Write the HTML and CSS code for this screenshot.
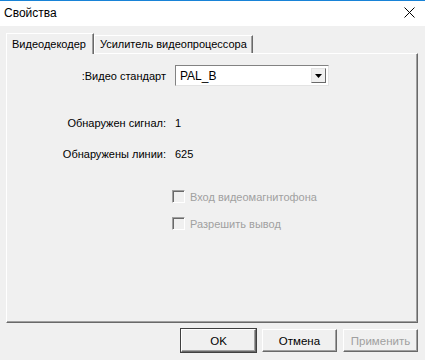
FILE: index.html
```html
<!DOCTYPE html>
<html lang="ru">
<head>
  <meta charset="UTF-8" />
  <title>Свойства</title>
  <link rel="stylesheet" href="styles.css">
</head>
<body>
  <div class="window">
    <div class="titlebar">
      <span class="title">Свойства</span>
      <span class="close">
        <svg width="11" height="11" viewBox="0 0 11 11"><path d="M0.5 0.5 L10.5 10.5 M10.5 0.5 L0.5 10.5" stroke="#000" stroke-width="1" fill="none"/></svg>
      </span>
    </div>

    <div class="content">
      <div class="tabs">
        <div class="tab active">Видеодекодер</div>
        <div class="tab">Усилитель видеопроцессора</div>
      </div>

      <div class="panel">
        <div class="row row-standard">
          <span class="label">:Видео стандарт</span>
          <div class="select">
            <span class="select-value">PAL_B</span>
            <span class="select-btn">
              <svg width="7" height="4" viewBox="0 0 7 4"><path d="M0 0 H7 L3.5 4 Z" fill="#000"/></svg>
            </span>
          </div>
        </div>

        <div class="row row-signal">
          <span class="label">Обнаружен сигнал:</span>
          <span class="value">1</span>
        </div>

        <div class="row row-lines">
          <span class="label">Обнаружены линии:</span>
          <span class="value">625</span>
        </div>

        <div class="checks">
          <label class="check"><span class="box"></span>Вход видеомагнитофона</label>
          <label class="check"><span class="box"></span>Разрешить вывод</label>
        </div>
      </div>

      <div class="buttons">
        <button class="btn default">OK</button>
        <button class="btn">Отмена</button>
        <button class="btn disabled">Применить</button>
      </div>
    </div>
  </div>
</body>
</html>
```

FILE: styles.css
```css
body {
  margin: 0;
  font-family: 'Liberation Sans', Arial, sans-serif;
  font-size: 11px;
  color: #000;
  background: #f0f0f0;
}

.window {
  width: 425px;
  height: 360px;
  border-top: 1px solid #1883d7;
  box-sizing: border-box;
  background: #f0f0f0;
}

.titlebar {
  height: 25px;
  background: #fff;
  display: flex;
  align-items: center;
  justify-content: space-between;
  padding: 0 10px 0 4px;
}

.title {
  font-size: 12px;
  color: #000;
  margin-top: -2px;
}

.close {
  display: flex;
  margin-top: -3px;
}

.content {
  padding: 7px 7px 0 6px;
}

.tabs {
  display: flex;
  align-items: flex-end;
  height: 20px;
  padding-left: 2px;
  position: relative;
  z-index: 1;
}

.tab {
  height: 17px;
  padding: 0 5px;
  line-height: 16px;
  border-top: 1px solid #fff;
  border-left: 1px solid #fff;
  border-right: 1px solid #696969;
  box-shadow: inset -1px 0 #a0a0a0;
  background: #f0f0f0;
}

.tab.active {
  height: 20px;
  padding: 0 7px 0 5px;
  line-height: 20px;
  margin-bottom: -1px;
  margin-left: -2px;
}

.panel {
  height: 270px;
  border-top: 1px solid #fff;
  border-left: 1px solid #fff;
  border-right: 1px solid #696969;
  border-bottom: 1px solid #696969;
  box-shadow: inset -1px -1px #a0a0a0;
  box-sizing: border-box;
  padding-top: 11px;
}

.row {
  display: grid;
  grid-template-columns: 159px auto;
  column-gap: 9px;
  align-items: center;
}

.label {
  text-align: right;
}

.row-signal {
  margin-top: 31px;
}

.row-lines {
  margin-top: 19px;
}

.select {
  width: 154px;
  height: 21px;
  box-sizing: border-box;
  background: #fff;
  border-top: 1px solid #828282;
  border-left: 1px solid #828282;
  border-right: 1px solid #e3e3e3;
  border-bottom: 1px solid #e3e3e3;
  display: flex;
  align-items: center;
  justify-content: space-between;
  padding: 0 2px 0 4px;
  font-size: 12px;
}

.select-btn {
  width: 15px;
  height: 15px;
  box-sizing: border-box;
  background: #f0f0f0;
  border-top: 1px solid #e3e3e3;
  border-left: 1px solid #e3e3e3;
  border-right: 1px solid #696969;
  border-bottom: 1px solid #696969;
  display: flex;
  align-items: center;
  justify-content: center;
}

.checks {
  margin-top: 30px;
  padding-left: 165px;
  display: flex;
  flex-direction: column;
  gap: 14px;
}

.check {
  display: flex;
  align-items: center;
  gap: 5px;
  color: #a0a0a0;
}

.box {
  width: 13px;
  height: 13px;
  box-sizing: border-box;
  border-top: 1px solid #a0a0a0;
  border-left: 1px solid #a0a0a0;
  border-right: 1px solid #fff;
  border-bottom: 1px solid #fff;
  box-shadow: inset 1px 1px #696969;
  background: #f0f0f0;
}

.buttons {
  display: flex;
  justify-content: flex-end;
  gap: 6px;
  margin-top: 6px;
}

.btn {
  width: 75px;
  height: 23px;
  font-family: 'Liberation Sans', Arial, sans-serif;
  font-size: 11.5px;
  background: #f0f0f0;
  border-top: 1px solid #fff;
  border-left: 1px solid #fff;
  border-right: 1px solid #696969;
  border-bottom: 1px solid #696969;
  box-shadow: inset -1px -1px #a0a0a0;
  padding: 0;
  color: #000;
}

.btn.default {
  outline: 1px solid #404040;
  outline-offset: 0;
}

.btn.disabled {
  color: #a0a0a0;
}
```
